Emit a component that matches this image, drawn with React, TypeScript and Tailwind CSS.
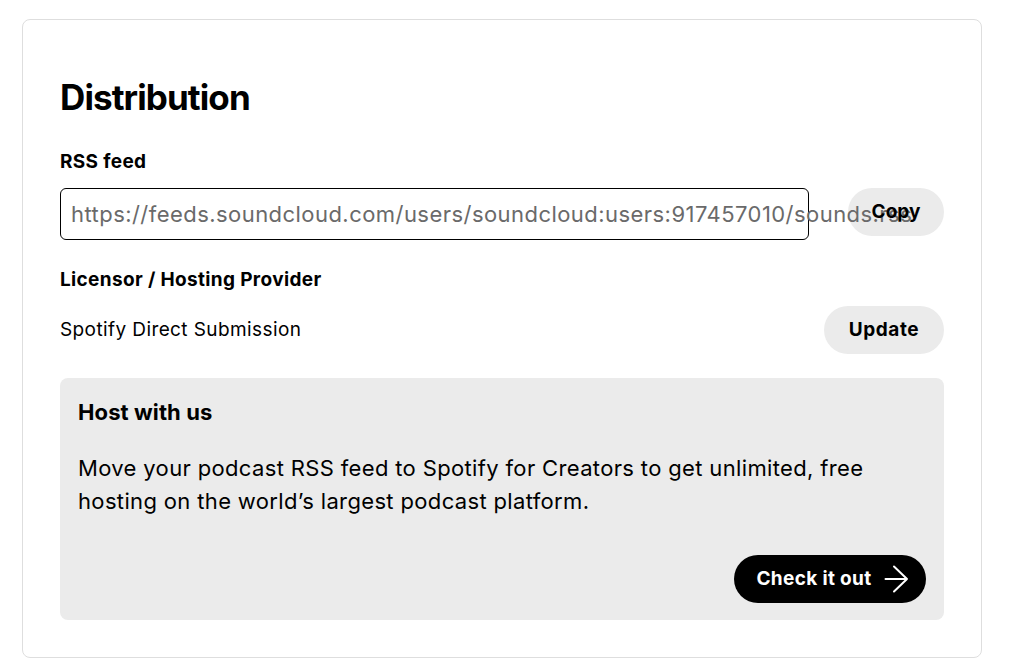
import React from "react";

export default function App() {
  const font = { fontFamily: "Inter, 'Noto Sans', sans-serif" };
  return (
    <div className="min-h-screen bg-white pt-[19px] pl-[22px] pr-[27px] pb-[11px]" style={font}>
      <div className="w-[960px] rounded-[8px] border border-[#dedede] bg-white px-[37px] pt-[55px] pb-[37px] text-black">
        <h1 className="text-[35px] font-bold leading-[44px] tracking-[-0.9px]">Distribution</h1>
        <div className="mt-[31px] text-[19px] font-bold leading-[24px] tracking-[0.35px]">RSS feed</div>
        <div className="mt-[14px] flex items-start gap-[39px]">
          <div className="flex h-[52px] w-[749px] shrink-0 items-center rounded-[6px] border border-black pl-[10px]">
            <span className="relative whitespace-nowrap text-[22px] leading-[28px] tracking-[0.45px] text-[#6a6a6a]">
              https://feeds.soundcloud.com/users/soundcloud:users:917457010/sounds.rss
            </span>
          </div>
          <button className="flex h-[48px] w-[98px] items-center justify-center rounded-full bg-[#ebebeb] text-[19px] font-bold">
            <span className="relative">Copy</span>
          </button>
        </div>
        <div className="mt-[28px] text-[19px] font-bold leading-[24px] tracking-[0.35px]">Licensor / Hosting Provider</div>
        <div className="mt-[14px] flex items-center justify-between">
          <span className="text-[19px] leading-[24px] tracking-[0.4px]">Spotify Direct Submission</span>
          <button className="flex h-[48px] w-[120px] items-center justify-center rounded-full bg-[#ebebeb] text-[19px] font-bold tracking-[0.6px]">
            Update
          </button>
        </div>
        <div className="mt-[24px] rounded-[8px] bg-[#ebebeb] px-[18px] pt-[18px] pb-[17px]">
          <div className="text-[22px] font-bold leading-[32px] tracking-[0.1px]">Host with us</div>
          <p className="mt-[24px] text-[22px] leading-[33px] tracking-[0.35px]">
            Move your podcast RSS feed to Spotify for Creators to get unlimited, free
            <br />
            hosting on the world’s largest podcast platform.
          </p>
          <div className="mt-[37px] flex justify-end">
            <button className="flex h-[48px] w-[192px] items-center justify-center gap-[12px] rounded-full bg-black pl-[5px] text-[19px] font-bold tracking-[0.35px] text-white">
              Check it out
              <svg width="25" height="28" viewBox="0 0 25 28" fill="none" stroke="white" strokeWidth="2" strokeLinecap="round" strokeLinejoin="round">
                <path d="M1.5 14h21.5M10 1.5L23 14 10 26.5" />
              </svg>
            </button>
          </div>
        </div>
      </div>
    </div>
  );
}
